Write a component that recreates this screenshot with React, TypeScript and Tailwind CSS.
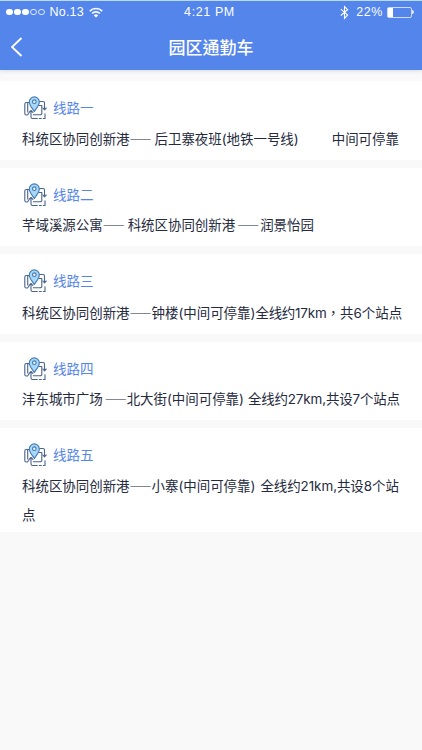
type Segment = {
  text: string;
  className?: string;
  lang?: string;
};

type Route = {
  name: string;
  segments: Segment[];
};

const DASH = '——';

const routes: Route[] = [
  {
    name: '线路一',
    segments: [
      { text: '科统区协同创新港' },
      { text: DASH },
      { text: '后卫寨夜班(地铁一号线)', className: 'ml-[3px]' },
      { text: '中间可停靠', className: 'ml-[33px]' },
    ],
  },
  {
    name: '线路二',
    segments: [
      { text: '芊域溪源公寓' },
      { text: DASH },
      { text: '科统区协同创新港', className: 'ml-[3px]' },
      { text: DASH, className: 'ml-0.5' },
      { text: '润景怡园', className: 'ml-px' },
    ],
  },
  {
    name: '线路三',
    segments: [
      { text: '科统区协同创新港' },
      { text: DASH },
      { text: '钟楼(中间可停靠)' },
      { text: '全线约17km', className: 'tracking-[-0.2px]' },
      { text: '，', className: "font-['Noto_Sans_CJK_TC',sans-serif]", lang: 'zh-TW' },
      { text: '共6个站点' },
    ],
  },
  {
    name: '线路四',
    segments: [
      { text: '沣东城市广场' },
      { text: DASH, className: 'ml-0.5' },
      { text: '北大街(中间可停靠)' },
      { text: '全线约27km,共设7个站点', className: 'ml-1 tracking-[-0.15px]' },
    ],
  },
  {
    name: '线路五',
    segments: [
      { text: '科统区协同创新港' },
      { text: DASH },
      { text: '小寨(中间可停靠)' },
      { text: '全线约21km,共设8个站', className: 'ml-[5px] tracking-[-0.05px]' },
      { text: '点' },
    ],
  },
];

const BluetoothIcon = () => (
  <svg className="h-[15px] w-[9px]" viewBox="0 0 9 15" fill="none" stroke="white" strokeWidth="1.1">
    <path d="M.8 4.2 7.6 10 4.5 13.3V1.5l3.1 3.2L.8 10.5" />
  </svg>
);

const WifiIcon = () => (
  <svg className="h-[11px] w-3.5" viewBox="0 0 14 11" fill="none" stroke="white" strokeWidth="1.6">
    <path d="M.8 4.1a8.7 8.7 0 0 1 12.4 0M3.1 6.5a5.5 5.5 0 0 1 7.8 0" />
    <path d="M7 10.6 4.8 8.4a3.1 3.1 0 0 1 4.4 0z" fill="white" stroke="none" />
  </svg>
);

const RouteIcon = () => (
  <svg
    className="h-6 w-6 shrink-0"
    viewBox="0 0 24 24"
    fill="none"
    stroke="#4a648c"
    strokeWidth="1.1"
    strokeLinecap="round"
    strokeLinejoin="round"
  >
    <path d="M5 6.500H2.300Q.8 6.500 .8 8v9.500q0 1.500 1.500 1.500h1.200L5 17M3.700 7V16" />
    <path d="M15.500 5.500h3.500q1.500 0 1.500 1.500v6.500M18.900 12l1.600 1.800L22.200 12" />
    <path d="M14.800 9.500h3V18l-1.300.8H9.300" />
    <path d="M7 14.500v6.500q0 1.500 1.500 1.500h4.800M15.300 22.500h2M19.300 22.500h1.700v-4.700M5.100 16.400 7 14.500l1.900 1.900" />
    <path
      d="M10.300 15.500C8.500 12.300 5.300 9.400 5.300 5.900a5 5 0 0 1 10 0c0 3.500-3.200 6.400-5 9.600z"
      fill="#a5d8fb"
      stroke="#4779ad"
    />
    <circle cx="10.3" cy="5.7" r="1.8" fill="#e8f6ff" stroke="#4779ad" />
  </svg>
);

const StatusBar = () => (
  <div className="grid h-[22px] grid-cols-3 items-center pr-2 pl-[6px] font-['Liberation_Sans',sans-serif] text-[12.500px] text-white">
    <div className="flex items-center">
      <div className="mr-[5px] flex gap-[1.500px]">
        {[true, true, true, false, false].map((filled, i) => (
          <span
            key={i}
            className={`h-[6.500px] w-[6.500px] rounded-full border-[0.500px] border-white/80 ${filled ? 'bg-white' : ''}`}
          />
        ))}
      </div>
      <span className="mr-[5px] tracking-[0.200px]">No.13</span>
      <WifiIcon />
    </div>
    <span className="pr-px text-center tracking-[0.600px]">4:21 PM</span>
    <div className="flex items-center justify-end">
      <BluetoothIcon />
      <span className="mr-1 ml-[7px] tracking-[0.600px]">22%</span>
      <span className="flex h-[11px] w-[25px] rounded-[2px] border border-white/70">
        <span className="w-[5px] bg-white" />
      </span>
      <span className="h-1 w-[2px] rounded-r bg-white/80" />
    </div>
  </div>
);

const RouteCard = ({ route }: { route: Route }) => (
  <li className="bg-white px-[22px] pt-[15px] pb-[6.300px] last:pb-[3px]">
    <div className="flex h-[28.500px] items-start gap-[5px] pl-0.5">
      <RouteIcon />
      <h2 className="text-[13.500px] leading-6 text-[#5686e8]">{route.name}</h2>
    </div>
    <p className="-mr-1.5 text-[13.450px] leading-[28.800px] text-[#252a3d]">
      {route.segments.map((segment, i) =>
        segment.text === DASH ? (
          <span
            key={i}
            className={`font-['Noto_Sans_CJK_SC',sans-serif] text-[11px] leading-none font-bold ${segment.className ?? ''}`}
          >
            {segment.text}
          </span>
        ) : (
          <span key={i} className={segment.className} lang={segment.lang}>
            {segment.text}
          </span>
        )
      )}
    </p>
  </li>
);

const App = () => {
  return (
    <div className="min-h-screen bg-[#f9f9fa] font-['Inter','Noto_Sans_CJK_SC',sans-serif]" lang="zh-CN">
      <header className="h-[70px] border-t border-[#b9dcf5] bg-[#5385eb] shadow-[0_1px_4px_rgba(80,100,180,0.2)]">
        <StatusBar />
        <div className="grid h-[47px] grid-cols-[1fr_auto_1fr] items-center px-[11px]">
          <svg className="h-5 w-3" viewBox="0 0 12 20" fill="none" stroke="white" strokeWidth="1.9">
            <path d="M10.500 1 1 10l9.500 9" />
          </svg>
          <h1 className="font-['Noto_Sans_CJK_TC',sans-serif] text-[17px] font-medium text-white" lang="zh-TW">
            园区通勤车
          </h1>
        </div>
      </header>
      <ul className="mt-[11px] flex flex-col gap-2">
        {routes.map((route) => (
          <RouteCard key={route.name} route={route} />
        ))}
      </ul>
    </div>
  );
};

export default App;
